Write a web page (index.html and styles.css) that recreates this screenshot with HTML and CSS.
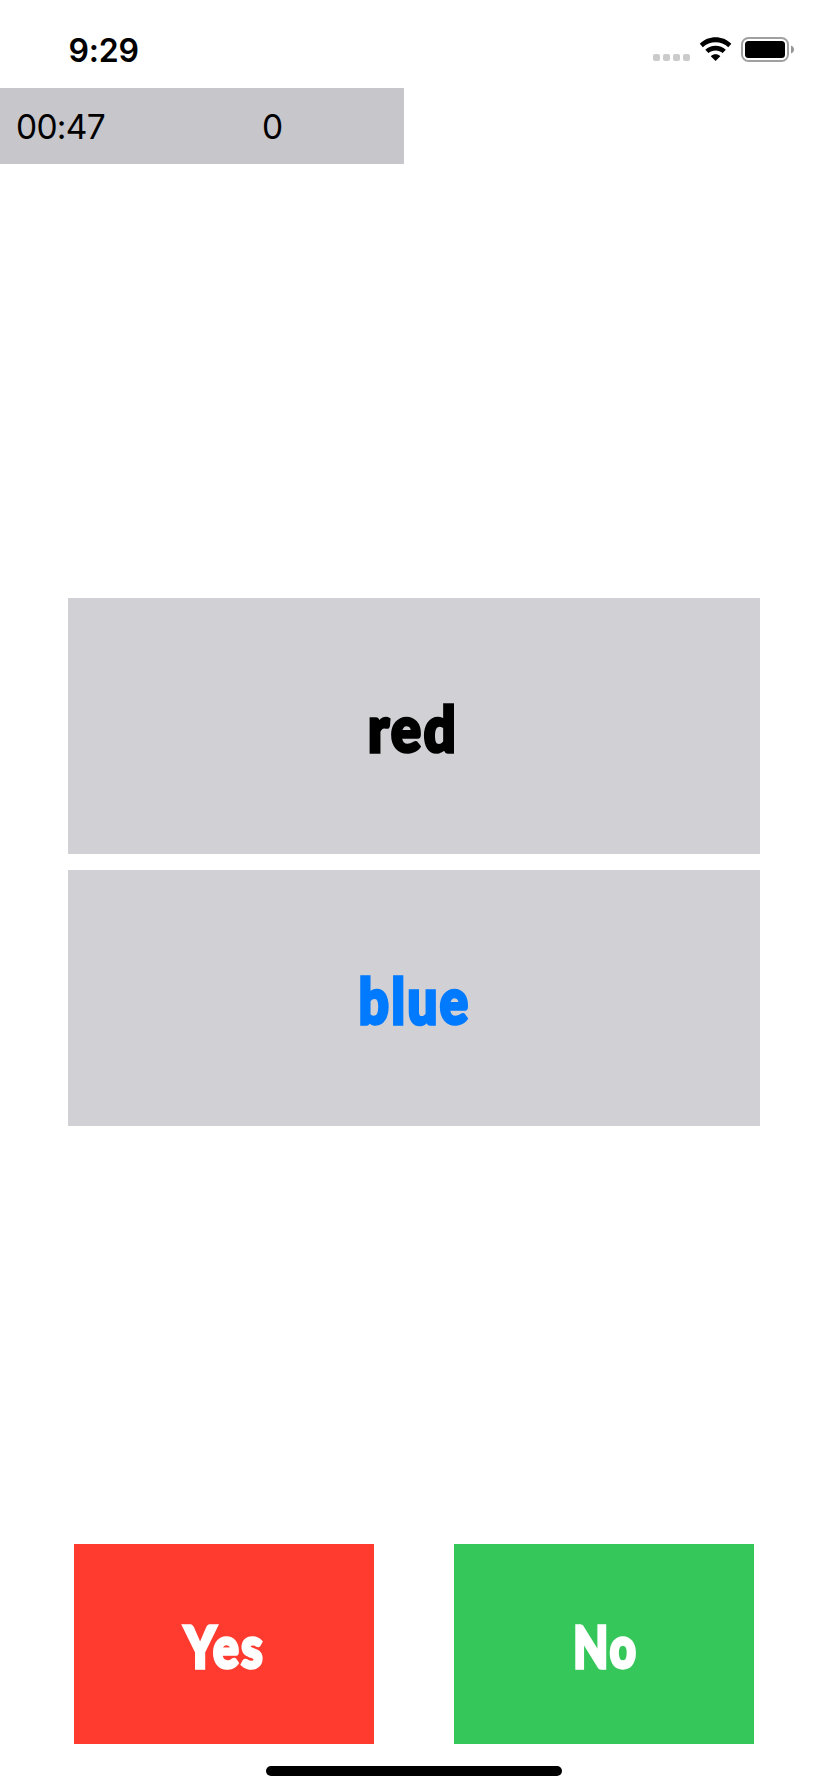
FILE: index.html
```html
<!DOCTYPE html>
<html lang="en">
<head>
<meta charset="utf-8">
<title>Color Match</title>
<link rel="stylesheet" href="styles.css">
</head>
<body>
<div class="screen">
  <header class="status">
    <span class="clock">9:29</span>
    <svg class="indicators" width="144" height="30" viewBox="652 34 144 30">
      <g fill="#cbcbcb">
        <rect x="653" y="54" width="7" height="7" rx="2"/>
        <rect x="663" y="54" width="7" height="7" rx="2"/>
        <rect x="673" y="54" width="7" height="7" rx="2"/>
        <rect x="683" y="54" width="7" height="7" rx="2"/>
      </g>
      <path d="M699.8 43.8C708.3 35.2 722.8 35.2 731.3 43.8L728.3 47.2C721.3 40.6 709.8 40.6 702.8 47.2Z"/>
      <path d="M705.3 49.8C711 44.4 720.2 44.4 725.8 49.8L722.7 53.1C718.8 49.6 712.3 49.6 708.4 53.1Z"/>
      <path d="M710.8 56.2C713.6 53.7 717.6 53.7 720.3 56.2L715.6 61Z"/>
      <rect x="742" y="38" width="46" height="23" rx="6.5" fill="none" stroke="#a0a0a0" stroke-width="2"/>
      <rect x="745" y="41" width="40" height="17" rx="3.5"/>
      <path d="M791 45.5C795 46.8 795 52.2 791 53.5Z" fill="#969696"/>
    </svg>
  </header>
  <section class="scorebar">
    <span class="timer">00:47</span>
    <span class="score">0</span>
  </section>
  <main class="cards">
    <div class="card"><span class="word word-red">red</span></div>
    <div class="card"><span class="word word-blue">blue</span></div>
  </main>
  <nav class="answers">
    <button class="answer yes"><span class="label label-yes">Yes</span></button>
    <button class="answer no"><span class="label label-no">No</span></button>
  </nav>
  <div class="home"></div>
</div>
</body>
</html>
```
FILE: styles.css
```css
* { box-sizing: border-box; }
body { margin: 0; background: #fff; color: #000; }
.screen {
  display: flex;
  flex-direction: column;
  width: 828px;
  height: 1792px;
  overflow: hidden;
  font-family: Inter, sans-serif;
}
.status {
  display: flex;
  justify-content: space-between;
  height: 88px;
  padding: 34px 32px 0 68.5px;
}
.clock {
  font-size: 32px;
  font-weight: 600;
  line-height: 33px;
  letter-spacing: -0.2px;
}
.indicators { display: block; }
.scorebar {
  display: grid;
  grid-template-columns: 246px 1fr;
  width: 404px;
  height: 76px;
  padding-left: 16px;
  background: #c7c6cb;
  font-size: 33.5px;
  line-height: 79px;
}
.timer { letter-spacing: -0.7px; }
.cards {
  display: flex;
  flex-direction: column;
  gap: 16px;
  margin: 434px 68px 0;
}
.card {
  display: flex;
  align-items: center;
  justify-content: center;
  height: 256px;
  background: #d1d0d5;
}
.word, .label {
  display: block;
  margin-right: -3px;
  padding-top: 4px;
  font-family: "Marker Felt", Lato, sans-serif;
  font-weight: 900;
  letter-spacing: 3px;
  white-space: nowrap;
  -webkit-text-stroke: 3.5px currentColor;
  paint-order: stroke fill;
  stroke-linejoin: round;
}
.word { font-size: 62px; line-height: 64px; }
.word-red { transform: translateX(-2px) scaleX(0.9); }
.word-blue { color: #007aff; transform: translateX(-1px) scaleX(0.85); }
.answers {
  display: flex;
  gap: 80px;
  margin: 418px 74px 0;
}
.answer {
  display: flex;
  align-items: center;
  justify-content: center;
  width: 300px;
  height: 200px;
  padding: 0;
  border: 0;
  color: #fff;
}
.yes { background: #ff3b30; }
.no { background: #35c759; }
.label { font-size: 58px; line-height: 60px; }
.label-yes { transform: translateX(-1px) scaleX(0.83); }
.label-no { transform: scaleX(0.78); }
.home {
  width: 296px;
  height: 10px;
  margin: 22px auto 0;
  border-radius: 5px;
  background: #000;
}
```
